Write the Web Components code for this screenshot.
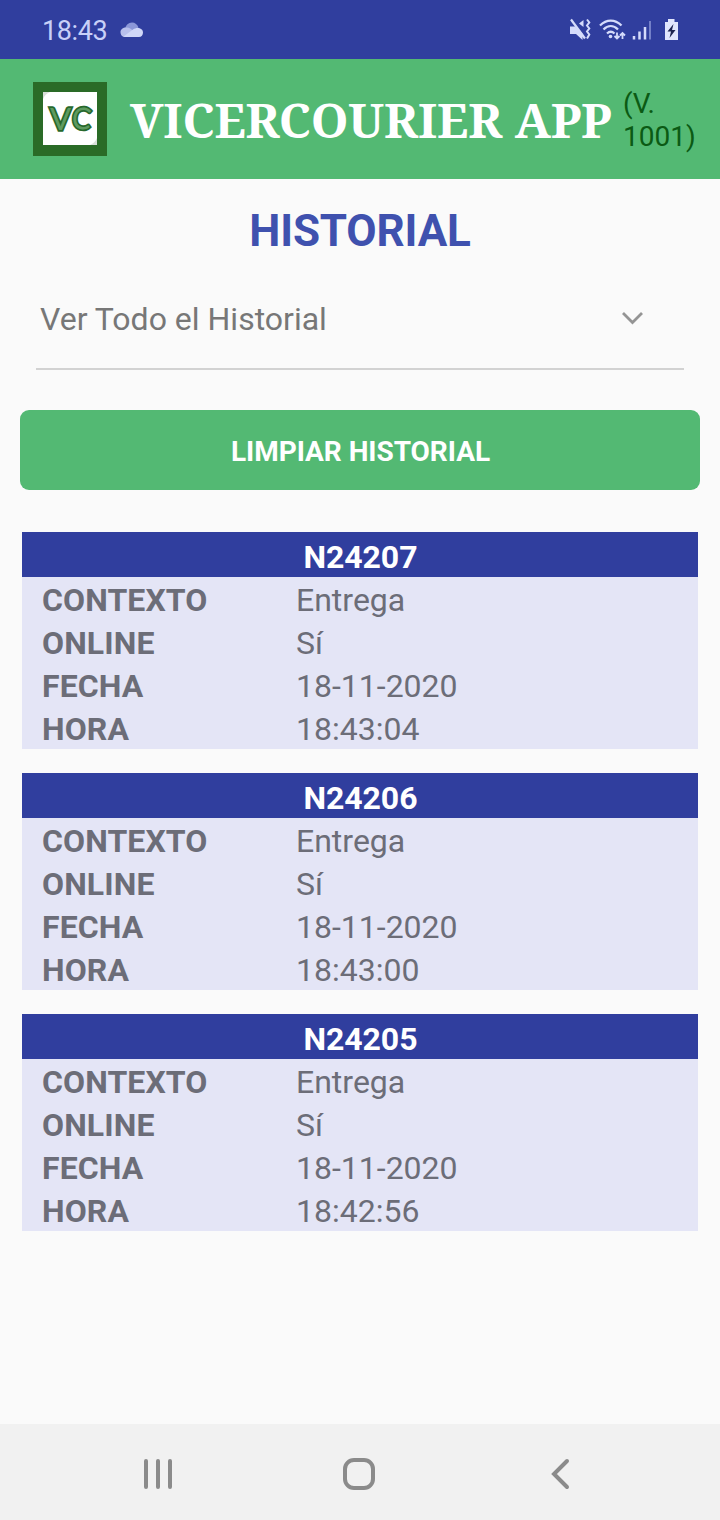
<!DOCTYPE html>
<html lang="es">
<head>
<meta charset="utf-8">
<title>Vicercourier App</title>
<style>
  body {
    margin: 0;
    background: #fafafa;
    font-family: Roboto, sans-serif;
  }
</style>
</head>
<body>
<vc-screen>
  <status-bar slot="top" time="18:43"></status-bar>
  <app-header slot="top" version="(V. 1001)">VICERCOURIER APP</app-header>
  <page-title>HISTORIAL</page-title>
  <select-field>Ver Todo el Historial</select-field>
  <action-button>LIMPIAR HISTORIAL</action-button>
  <history-card code="N24207" contexto="Entrega" online="Sí" fecha="18-11-2020" hora="18:43:04"></history-card>
  <history-card code="N24206" contexto="Entrega" online="Sí" fecha="18-11-2020" hora="18:43:00"></history-card>
  <history-card code="N24205" contexto="Entrega" online="Sí" fecha="18-11-2020" hora="18:42:56"></history-card>
  <nav-bar slot="bottom"></nav-bar>
</vc-screen>

<script>
class Screen extends HTMLElement {
  constructor() {
    super();
    this.attachShadow({ mode: 'open' });
    this.shadowRoot.innerHTML = `
    <style>
      :host {
        display: flex;
        flex-direction: column;
        width: 720px;
        height: 1520px;
        overflow: hidden;
        background: #fafafa;
      }

      main {
        flex: 1;
        display: flex;
        flex-direction: column;
      }
    </style>
    <slot name="top"></slot>
    <main><slot></slot></main>
    <slot name="bottom"></slot>
    `;
  }
}

class StatusBar extends HTMLElement {
  constructor() {
    super();
    this.attachShadow({ mode: 'open' });
    this.shadowRoot.innerHTML = `
    <style>
      :host {
        display: flex;
        align-items: center;
        justify-content: space-between;
        box-sizing: border-box;
        height: 59px;
        padding: 0 40px 0 42px;
        background: #303e9e;
        color: #c8d0f8;
        font-size: 27px;
      }

      div {
        display: flex;
        align-items: center;
      }

      span {
        line-height: 32px;
        padding-top: 2px;
        letter-spacing: -0.4px;
      }

      svg {
        display: block;
      }

      .cloud {
        margin-left: 13px;
      }
    </style>
    <div>
      <span>${this.getAttribute('time')}</span>
      <svg class="cloud" width="24" height="16" viewBox="0 0 24 16">
        <path fill="#8b97d8" d="M5 8C5 3.500 8.500 0.500 12 0.500C15 0.500 17.500 2.500 18.500 5.500L10 12Z"/>
        <path fill="#b8c0ec" d="M0.500 10C0.500 7.500 3 5.500 6 5.500C9 5.200 11 6.500 13 9L14 15H5C2.500 15 0.500 13 0.500 10Z"/>
        <path fill="#d0d7f8" d="M3.500 14.500L13 7.500C17 4.500 23 6 23 10.500C23 13.200 21.500 15 19 15H5.500Z"/>
      </svg>
    </div>
    <svg width="112" height="30" viewBox="0 0 112 30" fill="none" stroke="#d5dbfb">
      <!-- muted, vibrating -->
      <path fill="#d5dbfb" stroke="none" d="M2 11.500H7L14.500 18.500V25L8 19H2ZM15.500 5V12L11 8.500Z"/>
      <path stroke-width="2.200" d="M3 4.500L17 23.500"/>
      <path stroke-width="2" d="M19 4.500L21.300 7.500L19 10.500L21.300 13.500L19 16.500L21.300 19.500L19 23.500"/>
      <!-- wifi with traffic arrows -->
      <path stroke-width="2.300" d="M32 10.500C38.500 4 47 4 53.500 10.500M35.500 14.500C40 10 45.500 10 50 14.500M39 18.500C41.500 16.200 44 16.200 46.500 18.500"/>
      <circle cx="42.500" cy="21.500" r="1.800" fill="#d5dbfb" stroke="none"/>
      <path stroke-width="1.800" d="M49 17.500V24M46.500 21L49 23.500L51.500 21M54.500 24V17.500M52 20.500L54.500 18L57 20.500"/>
      <!-- signal -->
      <path stroke-width="2.500" d="M66 21V24.500M71.500 16.500V24.500M77 12V24.500"/>
      <path stroke-width="2" stroke="#7480c8" d="M82 6V24.500"/>
      <!-- battery -->
      <path fill="#e0e5fd" stroke="none" d="M100 4H106.500V7H110V25H97V7H100Z"/>
      <path fill="#1d2350" stroke="none" d="M105.500 9L99.500 16.500H103L101.500 23L107.500 15H104Z"/>
    </svg>
    `;
  }
}

class AppHeader extends HTMLElement {
  constructor() {
    super();
    this.attachShadow({ mode: 'open' });
    this.shadowRoot.innerHTML = `
    <style>
      :host {
        display: flex;
        align-items: center;
        box-sizing: border-box;
        height: 120px;
        padding: 0 20px 0 33px;
        background: #53b973;
      }

      .logo {
        display: block;
        flex: none;
        margin-right: 23px;
      }

      h1 {
        flex: none;
        width: 483px;
        margin: 0;
        color: #fff;
        font: bold 48px "Noto Serif", "Liberation Serif", serif;
        letter-spacing: -0.15px;
        white-space: nowrap;
      }

      p {
        width: 76px;
        margin: 0 0 0 10px;
        padding-top: 2px;
        color: #0b5a14;
        font-size: 28px;
        line-height: 33px;
      }
    </style>
    <svg class="logo" width="74" height="74" viewBox="0 0 74 74">
      <rect width="74" height="74" fill="#2a6b27"/>
      <rect x="10" y="10" width="54" height="53" fill="#fff"/>
      <path d="M10 17V10H17Q12 12 10 17ZM64 56V63H57Q62 61 64 56Z" fill="#d9dfd9"/>
      <g font-family="Lato, sans-serif" font-weight="400" font-size="30" fill="#5f9a60" stroke="#27682c" stroke-width="3.500" paint-order="stroke">
        <text x="17" y="48" textLength="21" lengthAdjust="spacingAndGlyphs">V</text>
        <text x="39" y="47" transform="rotate(6 48 37)" textLength="19" lengthAdjust="spacingAndGlyphs">C</text>
      </g>
    </svg>
    <h1><slot></slot></h1>
    <p>${this.getAttribute('version')}</p>
    `;
  }
}

class PageTitle extends HTMLElement {
  constructor() {
    super();
    this.attachShadow({ mode: 'open' });
    this.shadowRoot.innerHTML = `
    <style>
      :host {
        display: block;
        padding-top: 26px;
      }

      h2 {
        margin: 0;
        color: #3f51ae;
        font-size: 44px;
        font-weight: bold;
        letter-spacing: -0.15px;
        line-height: 52px;
        text-align: center;
      }
    </style>
    <h2><slot></slot></h2>
    `;
  }
}

class SelectField extends HTMLElement {
  constructor() {
    super();
    this.attachShadow({ mode: 'open' });
    this.shadowRoot.innerHTML = `
    <style>
      :host {
        display: flex;
        align-items: center;
        justify-content: space-between;
        box-sizing: border-box;
        height: 100px;
        margin: 13px 36px 0;
        padding: 0 40px 0 4px;
        border-bottom: 2px solid #d2d2d2;
        color: #777;
        font-size: 32px;
      }
    </style>
    <span><slot></slot></span>
    <svg width="24" height="16" viewBox="0 0 24 16">
      <path d="M3 2L12.500 11.500L22 2" fill="none" stroke="#949494" stroke-width="2.800"/>
    </svg>
    `;
  }
}

class ActionButton extends HTMLElement {
  constructor() {
    super();
    this.attachShadow({ mode: 'open' });
    this.shadowRoot.innerHTML = `
    <style>
      :host {
        display: flex;
        margin: 40px 20px 42px;
      }

      button {
        flex: 1;
        height: 80px;
        padding: 3px 0 0 1px;
        border: none;
        border-radius: 9px;
        background: #53b973;
        color: #fff;
        font: bold 28px Roboto, sans-serif;
        letter-spacing: -0.05px;
      }
    </style>
    <button><slot></slot></button>
    `;
  }
}

class HistoryCard extends HTMLElement {
  constructor() {
    super();
    this.attachShadow({ mode: 'open' });
    this.build();
  }

  build() {
    const rows = ['contexto', 'online', 'fecha', 'hora'].map((name) => `
      <dt>${name.toUpperCase()}</dt><dd>${this.getAttribute(name)}</dd>`).join('');

    this.shadowRoot.innerHTML = `
    <style>
      :host {
        display: block;
        margin: 0 22px 24px;
        background: #e4e5f6;
        color: #6c6d78;
        font-size: 32px;
      }

      h3 {
        box-sizing: border-box;
        height: 45px;
        margin: 0;
        padding: 5px 0 0 1px;
        background: #303e9e;
        color: #fff;
        font-size: 32px;
        letter-spacing: -0.1px;
        line-height: 40px;
        text-align: center;
      }

      dl {
        display: grid;
        grid-template-columns: 254px 1fr;
        grid-auto-rows: 43px;
        margin: 0;
        padding-left: 20px;
      }

      dt, dd {
        margin: 0;
        padding-top: 3px;
        line-height: 40px;
      }

      dt {
        font-weight: bold;
        letter-spacing: 0.1px;
      }
    </style>
    <h3>${this.getAttribute('code')}</h3>
    <dl>${rows}</dl>
    `;
  }
}

class NavBar extends HTMLElement {
  constructor() {
    super();
    this.attachShadow({ mode: 'open' });
    this.shadowRoot.innerHTML = `
    <style>
      :host {
        display: flex;
        align-items: center;
        justify-content: space-between;
        box-sizing: border-box;
        height: 96px;
        padding: 4px 141px 0;
        background: #f1f1f1;
      }

      svg {
        fill: none;
        stroke: #8b8b8b;
        stroke-width: 4;
        stroke-linecap: round;
      }
    </style>
    <svg width="34" height="34" viewBox="0 0 34 34"><path d="M5 4V30M17 4V30M29 4V30"/></svg>
    <svg width="34" height="34" viewBox="0 0 34 34"><rect x="2" y="3" width="28" height="28" rx="9"/></svg>
    <svg width="34" height="34" viewBox="0 0 34 34"><path d="M22 4L9 17L22 30"/></svg>
    `;
  }
}

customElements.define('vc-screen', Screen);
customElements.define('status-bar', StatusBar);
customElements.define('app-header', AppHeader);
customElements.define('page-title', PageTitle);
customElements.define('select-field', SelectField);
customElements.define('action-button', ActionButton);
customElements.define('history-card', HistoryCard);
customElements.define('nav-bar', NavBar);
</script>
</body>
</html>
